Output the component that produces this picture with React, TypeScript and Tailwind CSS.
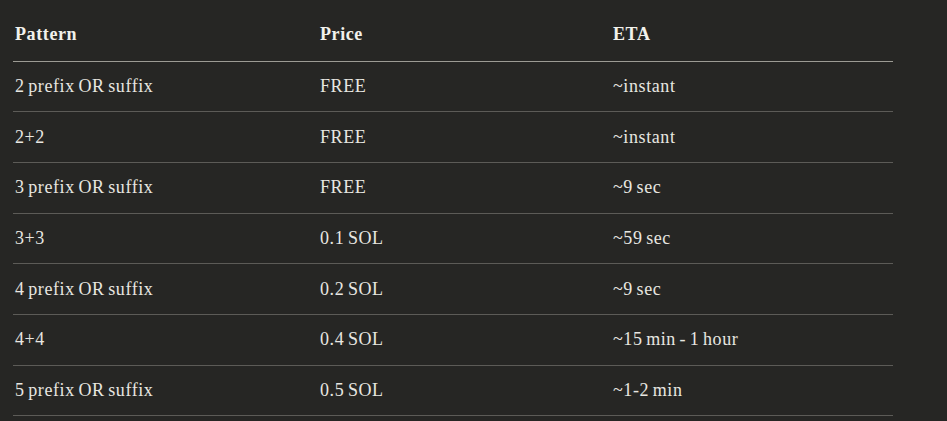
import React from 'react';

const rows = [
  { pattern: '2 prefix OR suffix', price: 'FREE', eta: '~instant' },
  { pattern: '2+2', price: 'FREE', eta: '~instant' },
  { pattern: '3 prefix OR suffix', price: 'FREE', eta: '~9 sec' },
  { pattern: '3+3', price: '0.1 SOL', eta: '~59 sec' },
  { pattern: '4 prefix OR suffix', price: '0.2 SOL', eta: '~9 sec' },
  { pattern: '4+4', price: '0.4 SOL', eta: '~15 min - 1 hour' },
  { pattern: '5 prefix OR suffix', price: '0.5 SOL', eta: '~1-2 min' },
];

export default function App() {
  return (
    <div className="min-h-[421px] w-full bg-[#262624] pt-[9px] font-['Liberation_Serif',serif] text-[18px] tracking-[0.6px] [word-spacing:-1.5px]">
      <table className="ml-[13px] w-[880px] border-collapse text-left">
        <thead>
          <tr className="h-[52px] border-b border-[#9c9b94]">
            <th className="w-[305px] pl-[2px] font-bold text-[#f2f1ec]">Pattern</th>
            <th className="w-[293px] pl-[2px] font-bold text-[#f2f1ec]">Price</th>
            <th className="pl-[2px] font-bold text-[#f2f1ec]">ETA</th>
          </tr>
        </thead>
        <tbody>
          {rows.map((row) => (
            <tr key={row.pattern} className="h-[50.7px] border-b border-[#5c5b57] text-[#e8e7e1]">
              <td className="pl-[2px]">{row.pattern}</td>
              <td className="pl-[2px]">{row.price}</td>
              <td className="pl-[2px]">{row.eta}</td>
            </tr>
          ))}
        </tbody>
      </table>
    </div>
  );
}
